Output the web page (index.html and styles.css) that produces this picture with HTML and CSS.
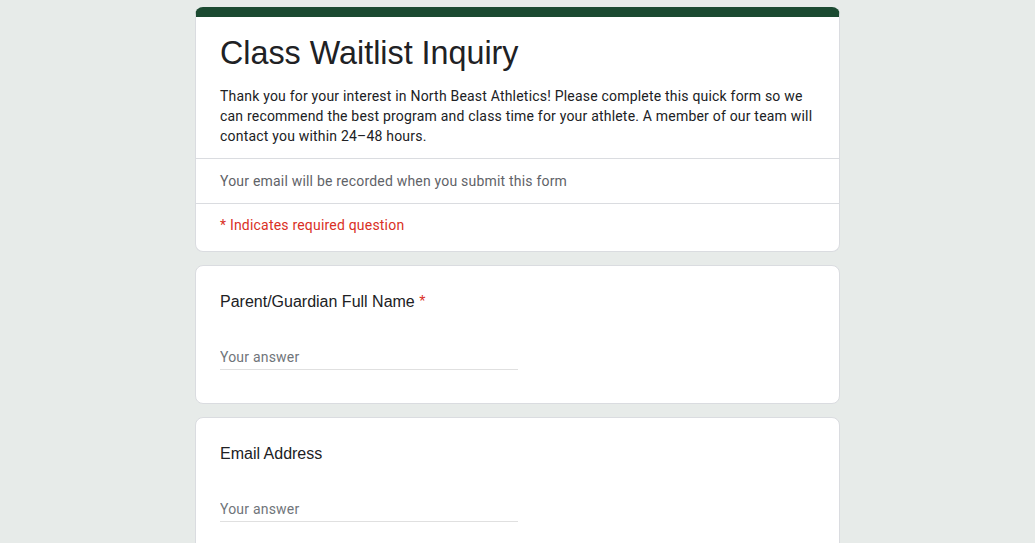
FILE: index.html
```html
<!DOCTYPE html>
<html lang="en">
<head>
  <meta charset="UTF-8">
  <meta name="viewport" content="width=device-width, initial-scale=1.0">
  <title>Class Waitlist Inquiry</title>
  <link rel="stylesheet" href="styles.css">
</head>
<body>
  <div class="form">
    <div class="card header-card">
      <div class="header-top">
        <h1>Class Waitlist Inquiry</h1>
        <p class="desc">Thank you for your interest in North Beast Athletics! Please complete this quick form so we can recommend the best program and class time for your athlete. A member of our team will contact you within 24–48 hours.</p>
      </div>
      <div class="header-row email-note">Your email will be recorded when you submit this form</div>
      <div class="header-row required-note">* Indicates required question</div>
    </div>

    <div class="card question">
      <div class="label">Parent/Guardian Full Name <span class="star">*</span></div>
      <input class="answer" type="text" placeholder="Your answer">
    </div>

    <div class="card question">
      <div class="label">Email Address</div>
      <input class="answer" type="text" placeholder="Your answer">
    </div>
  </div>
</body>
</html>
```

FILE: styles.css
```css
body {
  margin: 0;
  padding: 0;
  background-color: #e7ebe9;
  font-family: Roboto, 'Liberation Sans', Arial, sans-serif;
  color: #202124;
}

.form {
  width: 645px;
  margin: 0 auto;
  padding-top: 7px;
  display: flex;
  flex-direction: column;
  gap: 13px;
}

.card {
  background: #fff;
  border-radius: 8px;
  border: 1px solid #dadce0;
}

/* top card with the green bar */
.header-card {
  border-top: 10px solid #1b4a31;
}

.header-top {
  padding: 14px 24px 12px;
  border-bottom: 1px solid #dadce0;
}

.header-top h1 {
  margin: 0;
  font-family: 'Liberation Sans', Arial, sans-serif;
  font-weight: 400;
  font-size: 32.3px;
  line-height: 44px;
  color: #202124;
}

.desc {
  margin: 11px 0 0;
  font-size: 14px;
  line-height: 20px;
  letter-spacing: 0.2px;
  color: #202124;
}

.header-row {
  padding: 0 24px;
  font-size: 14px;
  letter-spacing: 0.2px;
}

.email-note {
  height: 44px;
  line-height: 44px;
  color: #5f6368;
  border-bottom: 1px solid #dadce0;
}

.required-note {
  height: 47px;
  line-height: 42px;
  color: #d93025;
}

.question {
  height: 139px;
  padding: 24px;
  box-sizing: border-box;
}

.label {
  font-family: 'Liberation Sans', Arial, sans-serif;
  font-size: 16px;
  line-height: 24px;
  color: #202124;
}

.star {
  color: #d93025;
}

.answer {
  display: block;
  margin-top: 33px;
  width: 298px;
  padding: 0 0 2px;
  border: none;
  border-bottom: 1px solid #e0e0e0;
  outline: none;
  font-family: Roboto, 'Liberation Sans', Arial, sans-serif;
  font-size: 14px;
  line-height: 20px;
  letter-spacing: 0.2px;
  color: #202124;
  background: transparent;
}

.answer::placeholder {
  color: #70757a;
}
```
